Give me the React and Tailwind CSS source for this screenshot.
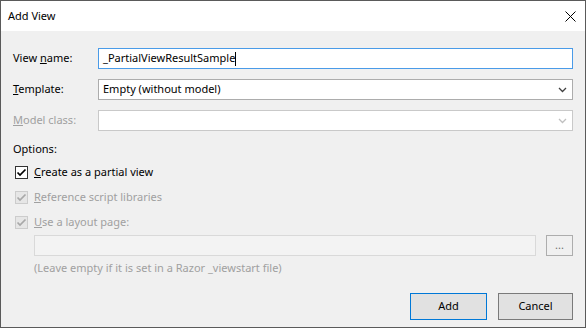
const font = { fontFamily: '"Noto Sans", "Liberation Sans", sans-serif' };

const Chevron = ({ color }) => (
  <svg width="9" height="6" viewBox="0 0 9 6" className="shrink-0">
    <path d="M1 1 L4.5 4.5 L8 1" fill="none" stroke={color} strokeWidth="1.3" />
  </svg>
);

const CheckBox = ({ disabled }) => (
  <div
    className={
      "w-[13px] h-[13px] border flex items-center justify-center shrink-0 " +
      (disabled ? "border-[#cccccc] bg-[#e6e6e6]" : "border-[#333333] bg-white")
    }
  >
    <svg width="11" height="11" viewBox="0 0 11 11">
      <path
        d="M1.5 5.5 L4 8 L9.5 2.5"
        fill="none"
        stroke={disabled ? "#a8a8a8" : "#000000"}
        strokeWidth="1.7"
      />
    </svg>
  </div>
);

const App = () => {
  return (
    <div
      className="w-[586px] h-[328px] border border-[#5a5a5a] bg-[#f0f0f0] flex flex-col text-[11px] text-black"
      style={font}
    >
      {/* barre de titre */}
      <div className="h-[30px] bg-white flex items-center justify-between pl-[7px] pr-[9px] shrink-0">
        <span className="text-[11px]">Add View</span>
        <svg width="11" height="11" viewBox="0 0 11 11">
          <path d="M0.5 0.5 L10.5 10.5 M10.5 0.5 L0.5 10.5" stroke="#000" strokeWidth="1" />
        </svg>
      </div>

      <div className="flex-1 flex flex-col pl-[12px] pr-[12px] pt-[17px]">
        <div className="flex flex-col gap-[10px]">
          <div className="flex items-center h-[21px]">
            <span className="w-[85px] shrink-0">
              View <span className="underline">n</span>ame:
            </span>
            <div className="flex-1 h-[21px] bg-white border border-[#4a9be8] flex items-center pl-[4px]">
              <span>_PartialViewResultSample</span>
              <span className="w-px h-[14px] bg-black" />
            </div>
          </div>
          <div className="flex items-center h-[21px]">
            <span className="w-[85px] shrink-0">
              <span className="underline">T</span>emplate:
            </span>
            <div className="flex-1 h-[21px] bg-white border border-[#acacac] flex items-center justify-between pl-[4px] pr-[5px]">
              <span>Empty (without model)</span>
              <Chevron color="#404040" />
            </div>
          </div>
          <div className="flex items-center h-[21px]">
            <span className="w-[85px] shrink-0 text-[#a0a0a0]">
              <span className="underline">M</span>odel class:
            </span>
            <div className="flex-1 h-[21px] bg-white border border-[#c9c9c9] flex items-center justify-end pr-[5px]">
              <Chevron color="#c0c0c0" />
            </div>
          </div>
        </div>

        <div className="mt-[10px] h-[17px] flex items-center">Options:</div>

        <div className="mt-[8px] flex flex-col gap-[12px] pl-[2px]">
          <div className="flex items-center gap-[6px] h-[13px]">
            <CheckBox />
            <span>
              <span className="underline">C</span>reate as a partial view
            </span>
          </div>
          <div className="flex items-center gap-[6px] h-[13px] text-[#a0a0a0]">
            <CheckBox disabled />
            <span>
              <span className="underline">R</span>eference script libraries
            </span>
          </div>
          <div className="flex items-center gap-[6px] h-[13px] text-[#a0a0a0]">
            <CheckBox disabled />
            <span>
              <span className="underline">U</span>se a layout page:
            </span>
          </div>
        </div>

        <div className="mt-[6px] pl-[21px] flex items-center gap-[10px]">
          <div className="flex-1 h-[21px] bg-[#f3f3f3] border border-[#d9d9d9]" />
          <div className="w-[27px] h-[21px] border border-[#adadad] flex items-center justify-center text-[#707070] leading-none pb-[2px]">
            ...
          </div>
        </div>
        <div className="mt-[4px] pl-[21px] text-[#a0a0a0]">
          (Leave empty if it is set in a Razor _viewstart file)
        </div>

        <div className="mt-auto mb-[7px] flex justify-end gap-[11px]">
          <button className="w-[77px] h-[27px] bg-[#e1e1e1] border border-[#0078d7]">Add</button>
          <button className="w-[75px] h-[27px] bg-[#e1e1e1] border border-[#7a7a7a]">Cancel</button>
        </div>
      </div>
    </div>
  );
};

export default App;
